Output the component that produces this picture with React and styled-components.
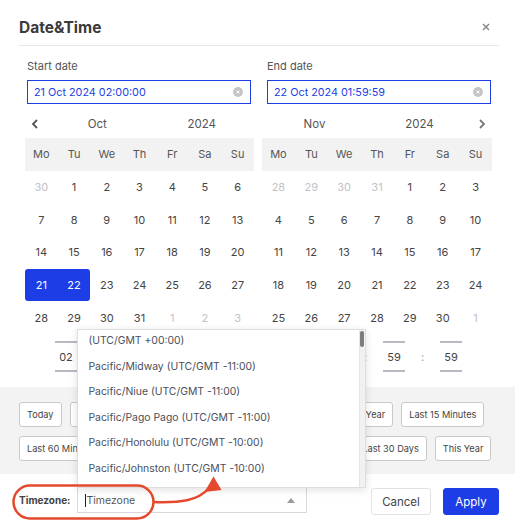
import React from 'react';
import styled, { createGlobalStyle } from 'styled-components';

const BLUE = '#1d3de6';

const Global = createGlobalStyle`
  html, body { margin: 0; padding: 0; background: #fff; }
  body { font-family: Inter, "Noto Sans", sans-serif; color: #444; }
  * { box-sizing: border-box; }
`;

const Dialog = styled.div`
  position: relative;
  width: 515px;
  height: 529px;
  overflow: hidden;
  background: #fff;
  display: flex;
  flex-direction: column;
`;

const Header = styled.div`
  display: flex;
  align-items: center;
  justify-content: space-between;
  margin: 0 16px 0 19px;
  padding-top: 9px;
  height: 46px;
  border-bottom: 1px solid #e7e7e7;
`;

const Title = styled.h1`
  margin: 0;
  font-size: 15.5px;
  font-weight: 700;
  color: #3b3b3b;
`;

const Close = styled.button`
  border: 0;
  background: none;
  padding: 0;
  margin-right: 8px;
  width: 10px;
  height: 10px;
  display: flex;
  align-items: center;
  justify-content: center;
`;

const Pickers = styled.div`
  display: grid;
  grid-template-columns: 229px 230px;
  column-gap: 8px;
  padding: 12px 0 0 25px;
`;

const Column = styled.div`
  display: flex;
  flex-direction: column;
`;

const Label = styled.div`
  font-size: 11px;
  line-height: 16px;
  color: #555;
  margin: 0 0 6px ${(p) => p.$inset}px;
`;

const Field = styled.div`
  margin-left: ${(p) => p.$inset}px;
  width: 224px;
  height: 24px;
  border: 1px solid ${BLUE};
  display: flex;
  align-items: center;
  justify-content: space-between;
  padding: 0 7px 0 6px;
  font-size: 10.8px;
  color: ${BLUE};
`;

const ClearDot = styled.span`
  width: 10px;
  height: 10px;
  border-radius: 50%;
  background: #c5c5c5;
  display: flex;
  align-items: center;
  justify-content: center;
`;

const Nav = styled.div`
  margin-top: 6px;
  height: 28px;
  display: flex;
  align-items: center;
  flex-direction: ${(p) => (p.$side === 'right' ? 'row-reverse' : 'row')};
`;

const Chev = styled.span`
  width: 20px;
  display: flex;
  justify-content: center;
  align-items: center;
`;

const NavBody = styled.div`
  flex: 1;
  display: flex;
`;

const NavText = styled.span`
  flex: 1;
  text-align: center;
  font-size: 11.5px;
  color: #555;
`;

const WeekHead = styled.div`
  display: grid;
  grid-template-columns: repeat(7, 1fr);
  background: #f2f2f2;
`;

const Days = styled.div`
  display: grid;
  grid-template-columns: repeat(7, 1fr);
`;

const Cell = styled.div`
  height: 32.7px;
  display: flex;
  align-items: center;
  justify-content: center;
  font-size: 11px;
  color: ${(p) => (p.$sel ? '#fff' : p.$muted ? '#c2c2c8' : p.$head ? '#555' : '#444')};
  background: ${(p) => (p.$sel ? BLUE : 'transparent')};
  border-radius: ${(p) => (p.$edge === 'start' ? '3px 0 0 3px' : p.$edge === 'end' ? '0 3px 3px 0' : '0')};
`;

const TimeRow = styled.div`
  margin-top: 7px;
  display: flex;
  align-items: center;
  justify-content: ${(p) => (p.$side === 'right' ? 'flex-end' : 'flex-start')};
  padding: 0 30px;
`;

const TimeBox = styled.div`
  width: 22px;
  height: 31px;
  border-top: 2px solid #b9b9c4;
  border-bottom: 2px solid #b9b9c4;
  display: flex;
  align-items: center;
  justify-content: center;
  font-size: 11px;
  color: #444;
`;

const Colon = styled.span`
  width: 35px;
  text-align: center;
  font-size: 11px;
  color: #999;
`;

const Band = styled.div`
  margin-top: 15px;
  height: 87px;
  background: #f3f3f3;
  padding: 15px 19px 0;
  display: flex;
  flex-direction: column;
  gap: 9px;
`;

const PresetRow = styled.div`
  display: flex;
  gap: 8px;
`;

const Preset = styled.button`
  height: 25px;
  padding: 0 7px;
  border: 1px solid #c9c9c9;
  border-radius: 3px;
  background: #fff;
  font-family: inherit;
  font-size: 9.2px;
  color: #444;
  white-space: nowrap;
`;

const Footer = styled.div`
  flex: 1;
  display: flex;
  justify-content: space-between;
  align-items: flex-start;
  padding: 13px 16px 0 19px;
`;

const TzGroup = styled.div`
  display: flex;
  align-items: center;
  height: 26px;
`;

const TzLabel = styled.span`
  font-size: 10px;
  font-weight: 700;
  color: #444;
  margin-right: 7px;
`;

const Select = styled.div`
  position: relative;
  width: 230px;
  height: 26px;
  border: 1px solid #d8d8d8;
  display: flex;
  align-items: center;
  padding: 0 11px 0 7px;
  font-size: 10.5px;
  color: #555;
`;

const Caret = styled.span`
  width: 1px;
  height: 13px;
  background: #222;
`;

const Placeholder = styled.span`
  flex: 1;
`;

const Menu = styled.div`
  position: absolute;
  left: -1px;
  bottom: 100%;
  width: 289px;
  height: 159px;
  background: #fff;
  border: 1px solid #dedede;
  box-shadow: 0 2px 8px rgba(0, 0, 0, 0.12);
  overflow: hidden;
  z-index: 2;
`;

const MenuList = styled.div`
  margin-top: -2px;
`;

const MenuItem = styled.div`
  height: 25.5px;
  display: flex;
  align-items: center;
  padding-left: 10px;
  font-size: 10.4px;
  color: #4b4f5c;
  white-space: nowrap;
`;

const Track = styled.div`
  position: absolute;
  top: 0;
  right: 0;
  width: 6px;
  height: 100%;
  background: #f1f1f1;
  border-left: 1px solid #e4e4e4;
`;

const Thumb = styled.div`
  width: 4px;
  height: 16px;
  margin: 1px 0 0 0;
  border-radius: 2px;
  background: #7d7d7d;
`;

const Actions = styled.div`
  display: flex;
  gap: 12px;
  margin-top: 1px;
`;

const ActionBtn = styled.button`
  height: 27px;
  width: ${(p) => p.$w}px;
  border-radius: 3px;
  font-family: inherit;
  font-size: 11.5px;
  border: 1px solid ${(p) => (p.$primary ? BLUE : '#e3e3e3')};
  background: ${(p) => (p.$primary ? BLUE : '#fff')};
  color: ${(p) => (p.$primary ? '#fff' : '#444')};
`;

const Annotation = styled.svg`
  position: absolute;
  left: 0;
  top: 0;
  width: 515px;
  height: 529px;
  pointer-events: none;
  z-index: 3;
`;

const WEEK = ['Mo', 'Tu', 'We', 'Th', 'Fr', 'Sa', 'Su'];

function buildDays(first, prevDays, count) {
  const out = [];
  for (let i = first - 1; i >= 0; i--) out.push({ d: prevDays - i, muted: true });
  for (let d = 1; d <= count; d++) out.push({ d });
  let n = 1;
  while (out.length < 35) out.push({ d: n++, muted: true });
  return out;
}

const octDays = buildDays(1, 30, 31).map((x) =>
  !x.muted && x.d === 21
    ? { ...x, sel: true, edge: 'start' }
    : !x.muted && x.d === 22
    ? { ...x, sel: true, edge: 'end' }
    : x
);
const novDays = buildDays(4, 31, 30);

const Chevron = ({ dir }) => (
  <svg width="8" height="10" viewBox="0 0 8 10">
    <polyline
      points={dir === 'left' ? '6,1 2,5 6,9' : '2,1 6,5 2,9'}
      fill="none"
      stroke={dir === 'left' ? '#555' : '#777'}
      strokeWidth="1.8"
    />
  </svg>
);

function Calendar({ side, month, days }) {
  return (
    <>
      <Nav $side={side}>
        <Chev>
          <Chevron dir={side} />
        </Chev>
        <NavBody>
          <NavText>{month}</NavText>
          <NavText>2024</NavText>
        </NavBody>
      </Nav>
      <WeekHead>
        {WEEK.map((w) => (
          <Cell key={w} $head>
            {w}
          </Cell>
        ))}
      </WeekHead>
      <Days>
        {days.map((x, i) => (
          <Cell key={i} $muted={x.muted} $sel={x.sel} $edge={x.edge}>
            {x.d}
          </Cell>
        ))}
      </Days>
    </>
  );
}

function Time({ side, h, m, s }) {
  return (
    <TimeRow $side={side}>
      <TimeBox>{h}</TimeBox>
      <Colon>:</Colon>
      <TimeBox>{m}</TimeBox>
      <Colon>:</Colon>
      <TimeBox>{s}</TimeBox>
    </TimeRow>
  );
}

const Clear = () => (
  <ClearDot>
    <svg width="4" height="4" viewBox="0 0 4 4">
      <path d="M0.5 0.5L3.5 3.5M3.5 0.5L0.5 3.5" stroke="#fff" strokeWidth="1" />
    </svg>
  </ClearDot>
);

const ZONES = [
  '(UTC/GMT +00:00)',
  'Pacific/Midway (UTC/GMT -11:00)',
  'Pacific/Niue (UTC/GMT -11:00)',
  'Pacific/Pago Pago (UTC/GMT -11:00)',
  'Pacific/Honolulu (UTC/GMT -10:00)',
  'Pacific/Johnston (UTC/GMT -10:00)',
  'Pacific/Rarotonga (UTC/GMT -10:00)',
];

const ROW1 = ['Today', 'Yesterday', 'This Week', 'Last Week', 'Last Day', 'Last Year', 'Last 15 Minutes'];
const ROW2 = ['Last 60 Minutes', 'Last 12 Hours', 'Last 24 Hours', 'Last 7 Days', 'Last 30 Days', 'This Year'];

export default function App() {
  return (
    <>
      <Global />
      <Dialog>
        <Header>
          <Title>Date&amp;Time</Title>
          <Close aria-label="close">
            <svg width="8" height="8" viewBox="0 0 8 8">
              <path d="M1 1L7 7M7 1L1 7" stroke="#8a8a8a" strokeWidth="1.5" />
            </svg>
          </Close>
        </Header>

        <Pickers>
          <Column>
            <Label $inset={2}>Start date</Label>
            <Field $inset={2}>
              <span>21 Oct 2024 02:00:00</span>
              <Clear />
            </Field>
            <Calendar side="left" month="Oct" days={octDays} />
            <Time side="left" h="02" m="00" s="00" />
          </Column>
          <Column>
            <Label $inset={5}>End date</Label>
            <Field $inset={5}>
              <span>22 Oct 2024 01:59:59</span>
              <Clear />
            </Field>
            <Calendar side="right" month="Nov" days={novDays} />
            <Time side="right" h="01" m="59" s="59" />
          </Column>
        </Pickers>

        <Band>
          <PresetRow>
            {ROW1.map((t) => (
              <Preset key={t}>{t}</Preset>
            ))}
          </PresetRow>
          <PresetRow>
            {ROW2.map((t) => (
              <Preset key={t}>{t}</Preset>
            ))}
          </PresetRow>
        </Band>

        <Footer>
          <TzGroup>
            <TzLabel>Timezone:</TzLabel>
            <Select>
              <Caret />
              <Placeholder>Timezone</Placeholder>
              <svg width="8" height="5" viewBox="0 0 8 5">
                <polygon points="4,0 8,5 0,5" fill="#9a9a9a" />
              </svg>
              <Menu>
                <MenuList>
                  {ZONES.map((z) => (
                    <MenuItem key={z}>{z}</MenuItem>
                  ))}
                </MenuList>
                <Track>
                  <Thumb />
                </Track>
              </Menu>
            </Select>
          </TzGroup>
          <Actions>
            <ActionBtn $w={60}>Cancel</ActionBtn>
            <ActionBtn $w={56} $primary>
              Apply
            </ActionBtn>
          </Actions>
        </Footer>

        <Annotation viewBox="0 0 515 529">
          <rect x="13.5" y="485.5" width="140" height="33" rx="16.5" fill="none" stroke="#e5492d" strokeWidth="2.5" />
          <path d="M153 502 C 180 503, 198 501, 209 488" fill="none" stroke="#e5492d" strokeWidth="2.5" />
          <polygon points="213.5,476.5 204.5,492 221.5,490" fill="#e5492d" />
        </Annotation>
      </Dialog>
    </>
  );
}
